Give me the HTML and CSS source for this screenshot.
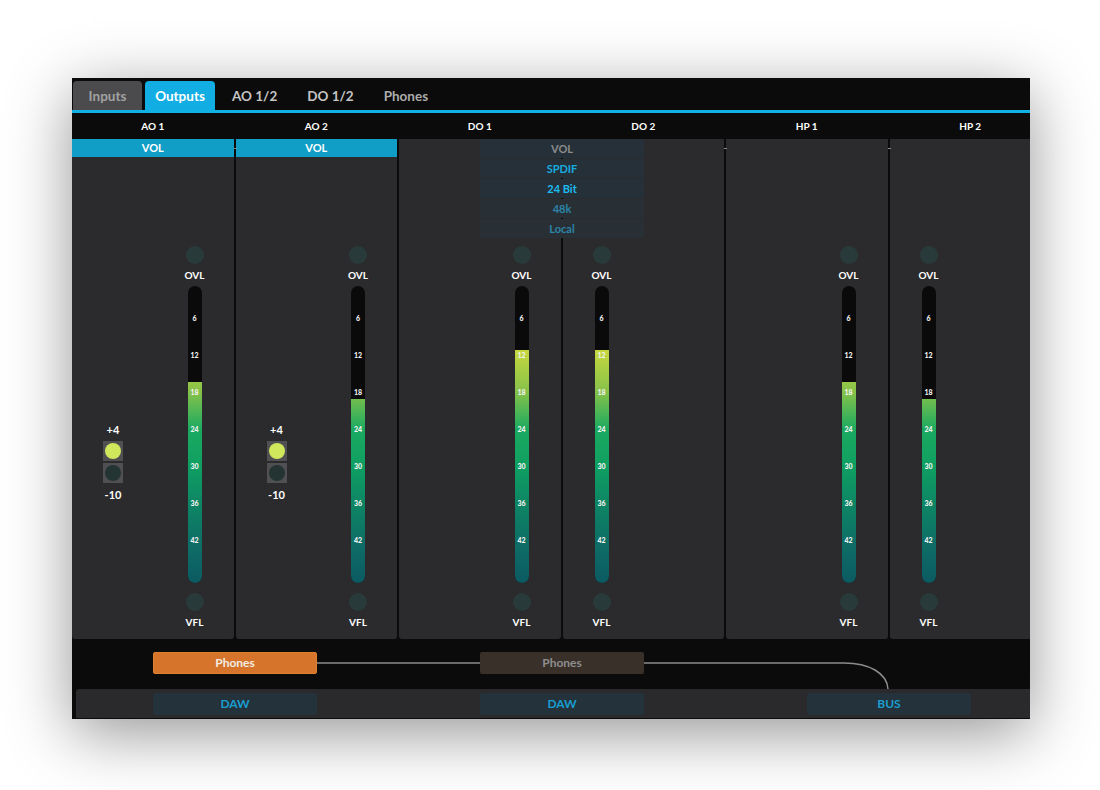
FILE: index.html
```html
<!DOCTYPE html>
<html lang="en">
<head>
    <meta charset="UTF-8">
    <title>Outputs</title>
    <link rel="stylesheet" href="styles.css">
</head>
<body>
<!--mixer window-->
<div class="app">
    <!--tabs-->
    <div class="tabs">
        <span class="tab tab_off">Inputs</span>
        <span class="tab tab_on">Outputs</span>
        <span class="tab">AO 1/2</span>
        <span class="tab">DO 1/2</span>
        <span class="tab tab_dim">Phones</span>
    </div>
    <!--channel names-->
    <div class="heads">
        <span>AO 1</span>
        <span>AO 2</span>
        <span>DO 1</span>
        <span>DO 2</span>
        <span>HP 1</span>
        <span>HP 2</span>
    </div>
    <!--strips-->
    <div class="strips">
        <!--AO 1-->
        <div class="strip">
            <div class="slot vol">VOL</div>
            <div class="body">
                <div class="switch">
                    <span class="lbl">+4</span>
                    <span class="sw"><i class="on"></i></span>
                    <span class="sw"><i></i></span>
                    <span class="lbl lbl_low">-10</span>
                </div>
                <div class="mcol">
                    <span class="led"></span>
                    <span class="lbl">OVL</span>
                    <div class="meter">
                        <div class="fill" style="height:201px"></div>
                        <div class="scale"><span>6</span><span>12</span><span>18</span><span>24</span><span>30</span><span>36</span><span>42</span></div>
                    </div>
                    <span class="led led_b"></span>
                    <span class="lbl">VFL</span>
                </div>
            </div>
        </div>
        <!--AO 2-->
        <div class="strip link">
            <div class="slot vol">VOL</div>
            <div class="body">
                <div class="switch">
                    <span class="lbl">+4</span>
                    <span class="sw"><i class="on"></i></span>
                    <span class="sw"><i></i></span>
                    <span class="lbl lbl_low">-10</span>
                </div>
                <div class="mcol">
                    <span class="led"></span>
                    <span class="lbl">OVL</span>
                    <div class="meter">
                        <div class="fill" style="height:184px"></div>
                        <div class="scale"><span>6</span><span>12</span><span>18</span><span>24</span><span>30</span><span>36</span><span>42</span></div>
                    </div>
                    <span class="led led_b"></span>
                    <span class="lbl">VFL</span>
                </div>
            </div>
        </div>
        <!--DO 1-->
        <div class="strip">
            <div class="slot"></div>
            <div class="body">
                <div class="mcol">
                    <span class="led"></span>
                    <span class="lbl">OVL</span>
                    <div class="meter">
                        <div class="fill" style="height:233px"></div>
                        <div class="scale"><span>6</span><span>12</span><span>18</span><span>24</span><span>30</span><span>36</span><span>42</span></div>
                    </div>
                    <span class="led led_b"></span>
                    <span class="lbl">VFL</span>
                </div>
            </div>
        </div>
        <!--DO 2-->
        <div class="strip">
            <div class="slot"></div>
            <div class="body">
                <div class="mcol mcol_left">
                    <span class="led"></span>
                    <span class="lbl">OVL</span>
                    <div class="meter">
                        <div class="fill" style="height:233px"></div>
                        <div class="scale"><span>6</span><span>12</span><span>18</span><span>24</span><span>30</span><span>36</span><span>42</span></div>
                    </div>
                    <span class="led led_b"></span>
                    <span class="lbl">VFL</span>
                </div>
            </div>
        </div>
        <!--HP 1-->
        <div class="strip link">
            <div class="slot"></div>
            <div class="body">
                <div class="mcol">
                    <span class="led"></span>
                    <span class="lbl">OVL</span>
                    <div class="meter">
                        <div class="fill" style="height:201px"></div>
                        <div class="scale"><span>6</span><span>12</span><span>18</span><span>24</span><span>30</span><span>36</span><span>42</span></div>
                    </div>
                    <span class="led led_b"></span>
                    <span class="lbl">VFL</span>
                </div>
            </div>
        </div>
        <!--HP 2-->
        <div class="strip link">
            <div class="slot"></div>
            <div class="body">
                <div class="mcol mcol_left">
                    <span class="led"></span>
                    <span class="lbl">OVL</span>
                    <div class="meter">
                        <div class="fill" style="height:184px"></div>
                        <div class="scale"><span>6</span><span>12</span><span>18</span><span>24</span><span>30</span><span>36</span><span>42</span></div>
                    </div>
                    <span class="led led_b"></span>
                    <span class="lbl">VFL</span>
                </div>
            </div>
        </div>
        <!--DO 1/2 menu-->
        <div class="menu">
            <span class="m_vol">VOL</span>
            <span class="m_sel">SPDIF</span>
            <span class="m_sel m_hi">24 Bit</span>
            <span class="m_dim">48k</span>
            <span class="m_dim">Local</span>
        </div>
    </div>
    <!--routing-->
    <div class="routes">
        <svg class="wires" width="958" height="50" viewBox="0 0 958 50">
            <path d="M245 24 H408 M572 24 H772 C797 24 815 34 816 50" fill="none" stroke="#8c8c8c" stroke-width="1.5"/>
        </svg>
        <span class="btn btn_orange">Phones</span>
        <span class="btn btn_brown">Phones</span>
    </div>
    <div class="bus">
        <span class="btn btn_src">DAW</span>
        <span class="btn btn_src">DAW</span>
        <span class="btn btn_src">BUS</span>
    </div>
</div>
</body>
</html>
```

FILE: styles.css
```css
*{
    margin: 0;
    padding: 0;
    box-sizing: border-box;
}
body
{
    background: #fff;
    font-family: "Lato", "Liberation Sans", sans-serif;
    font-weight: 700;
    min-height: 790px;
}
.app
{
    width: 958px;
    height: 641px;
    margin: 78px 0 71px 72px;
    background: #0b0b0b;
    overflow: hidden;
    display: flex;
    flex-direction: column;
    box-shadow: 0 14px 60px rgba(0,0,0,0.42);
}
/*tabs*/
.tabs
{
    height: 35px;
    display: flex;
    align-items: flex-end;
    gap: 3px;
    padding-left: 1px;
    border-bottom: 3px solid #10b2e6;
}
.tab
{
    height: 29px;
    line-height: 31px;
    padding: 0 13px 0 14px;
    font-size: 13.5px;
    color: #c4c4c4;
    border-radius: 4px 4px 0 0;
}
.tab_off
{
    width: 69px;
    background: #4b4b4d;
    color: #a2a2a2;
    text-align: center;
    padding: 0;
}
.tab_on
{
    width: 70px;
    background: #12ade2;
    color: #fff;
    text-align: center;
    padding: 0;
}
.tab_dim
{
    color: #acacac;
}
/*names*/
.heads
{
    height: 26px;
    display: grid;
    grid-template-columns: repeat(6, 161.5px);
    column-gap: 2px;
    align-items: center;
    text-align: center;
    color: #fff;
    font-size: 10px;
}
/*strips*/
.strips
{
    height: 500px;
    display: grid;
    grid-template-columns: repeat(6, 161.5px);
    column-gap: 2px;
    position: relative;
}
.strip
{
    background: #2b2b2d;
    border-radius: 0 0 3px 3px;
    position: relative;
}
.link:before
{
    content: "";
    position: absolute;
    left: -2px;
    top: 9px;
    width: 3px;
    height: 1px;
    background: #8a8a8a;
}
.slot
{
    height: 18px;
}
.vol
{
    background: #109ec6;
    color: #fff;
    font-size: 11px;
    line-height: 18px;
    text-align: center;
}
.body
{
    display: flex;
    padding-top: 89px;
}
.lbl
{
    display: block;
    color: #fff;
    font-size: 10px;
    line-height: 12px;
    text-align: center;
}
/*+4 / -10*/
.switch
{
    width: 30px;
    margin: 178px 0 0 26px;
    display: flex;
    flex-direction: column;
    align-items: center;
    gap: 2px;
}
.switch .lbl
{
    font-size: 11px;
    margin-bottom: 3px;
}
.switch .lbl_low
{
    margin: 4px 0 0;
}
.sw
{
    width: 20px;
    height: 20px;
    background: #505052;
    display: flex;
    align-items: center;
    justify-content: center;
}
.sw i
{
    width: 16px;
    height: 16px;
    border-radius: 50%;
    background: #243433;
}
.sw i.on
{
    background: #cfe85c;
}
/*meter column*/
.mcol
{
    width: 30px;
    margin: 0 24px 0 auto;
    display: flex;
    flex-direction: column;
    align-items: center;
}
.mcol_left
{
    margin: 0 auto 0 24px;
}
.led
{
    width: 18px;
    height: 18px;
    border-radius: 50%;
    background: #283b3a;
}
.mcol .lbl
{
    margin-top: 5px;
}
.led_b
{
    margin-top: 10px;
}
.meter
{
    width: 14px;
    height: 297px;
    margin-top: 5px;
    border-radius: 7px;
    background: #0a0a0a;
    position: relative;
    overflow: hidden;
}
.fill
{
    position: absolute;
    left: 0;
    right: 0;
    bottom: 0;
    background: linear-gradient(#d2dc3a 0, #d2dc3a 56px, #c6d83e 64px, #86c24a 106px, #1caa60 143px, #0f9f62 180px, #0d8664 217px, #0e7066 254px, #0c5a62 297px) no-repeat;
    background-size: 100% 297px;
    background-position: bottom;
}
.scale
{
    position: absolute;
    left: 0;
    right: 0;
    top: 0;
    bottom: 0;
    display: flex;
    flex-direction: column;
    align-items: center;
    padding-top: 26px;
    gap: 25px;
}
.scale span
{
    height: 12px;
    line-height: 12px;
    font-size: 7px;
    font-weight: 900;
    color: #f2f2f2;
}
/*DO menu*/
.menu
{
    position: absolute;
    left: 408px;
    top: 0;
    width: 164px;
    display: flex;
    flex-direction: column;
    gap: 1px;
}
.menu span
{
    height: 19px;
    line-height: 19px;
    text-align: center;
    font-size: 11px;
    background: #253038;
}
.m_vol
{
    color: #8c8c8c;
}
.m_sel
{
    color: #17ace0;
}
.m_hi
{
    color: #1dbdf2;
}
.m_dim
{
    color: #2c84a8;
    background: #283035 !important;
}
/*routing*/
.routes
{
    height: 50px;
    position: relative;
    display: flex;
    gap: 163px;
    padding: 13px 0 0 81px;
}
.wires
{
    position: absolute;
    left: 0;
    top: 0;
}
.btn
{
    width: 164px;
    height: 22px;
    line-height: 22px;
    text-align: center;
    font-size: 12px;
    border-radius: 2px;
    position: relative;
}
.btn_orange
{
    background: #d5742a;
    border: 1px solid #e0802f;
    line-height: 20px;
    color: #f4ece4;
}
.btn_brown
{
    background: #3a302a;
    color: #8e8e8e;
}
.bus
{
    height: 29px;
    margin-left: 4px;
    background: #2a2a2c;
    border-radius: 3px 0 0 0;
    display: flex;
    gap: 163px;
    padding: 4px 0 0 77px;
}
.btn_src
{
    background: #24323b;
    color: #1a9ed0;
}
```
